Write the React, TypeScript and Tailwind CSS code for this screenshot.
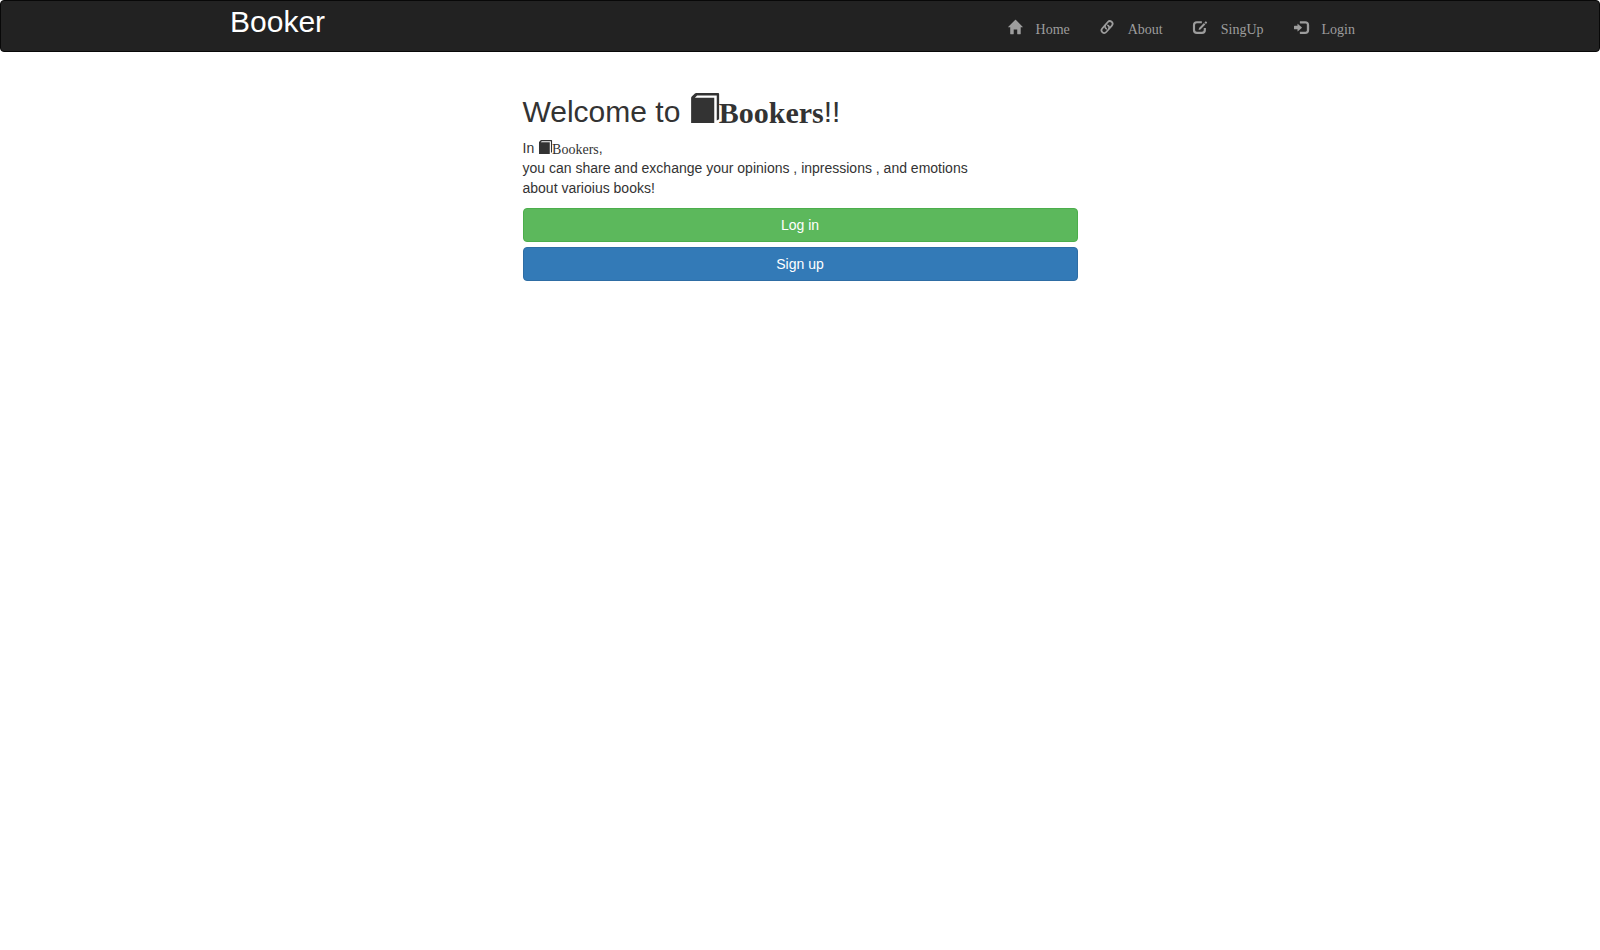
import type { ReactNode } from "react";

function Glyph({ className, children }: { className: string; children: ReactNode }) {
  return (
    <svg viewBox="0 0 1200 1200" fill="currentColor" overflow="visible" aria-hidden="true" className={`inline-block shrink-0 align-baseline ${className}`}>
      {children}
    </svg>
  );
}

function HomeIcon() {
  return (
    <Glyph className="size-3.5">
      <path transform="matrix(1 0 0 -1 -10 1215)" d="M18 618l620 608q8 7 18.5 7t17.5 -7l608 -608q8 -8 5.5 -13t-12.5 -5h-175v-575q0 -10 -7.5 -17.5t-17.5 -7.5h-250q-10 0 -17.5 7.5t-7.5 17.5v375h-300v-375q0 -10 -7.5 -17.5t-17.5 -7.5h-250q-10 0 -17.5 7.5t-7.5 17.5v575h-175q-10 0 -12.5 5t5.5 13z" />
    </Glyph>
  );
}

function LinkIcon() {
  return (
    <Glyph className="size-3.5">
      <g transform="translate(604 604) rotate(-49) scale(85.7)" fill="none" stroke="currentColor" strokeWidth="1.7">
        <path d="M-.2 2.7H4.3A2.7 2.7 0 0 0 4.3-2.7H.9A2.7 2.7 0 0 0-1.8 0Q-1.8 .6-1.4 1.1" />
        <path d="M.2-2.7H-4.3A2.7 2.7 0 0 0-4.3 2.7H-.9A2.7 2.7 0 0 0 1.8 0Q1.8-.6 1.4-1.1" />
      </g>
    </Glyph>
  );
}

function EditIcon() {
  return (
    <Glyph className="size-3.5">
      <path d="M760 190H330Q85 190 85 435V865Q85 1110 330 1110H770Q1015 1110 1015 865V690" fill="none" stroke="currentColor" strokeWidth="185" />
      <path d="M480 850L520 690L935 260L1060 385L640 810zM980 215L1070 125Q1100 100 1130 125L1200 195Q1220 225 1195 250L1105 340z" />
    </Glyph>
  );
}

function LoginIcon() {
  return (
    <Glyph className="size-3.5">
      <path transform="matrix(1 0 0 -1 0 1200)" d="M550 1100h400q165 0 257.5 -92.5t92.5 -257.5v-400q0 -165 -92.5 -257.5t-257.5 -92.5h-400q-21 0 -35.5 14.5t-14.5 35.5v100q0 21 14.5 35.5t35.5 14.5h450q41 0 70.5 29.5t29.5 70.5v500q0 41 -29.5 70.5t-70.5 29.5h-450q-21 0 -35.5 14.5t-14.5 35.5v100q0 21 14.5 35.5t35.5 14.5zM338 867l324 -284q16 -14 16 -33t-16 -33l-324 -284q-16 -14 -27 -9t-11 26v150h-250q-21 0 -35.5 14.5t-14.5 35.5v200q0 21 14.5 35.5t35.5 14.5h250v150q0 21 11 26t27 -9z" />
    </Glyph>
  );
}

function BookIcon({ className }: { className: string }) {
  return (
    <Glyph className={className}>
      <path d="M85 1200V190Q85 165 110 140L225 25Q250 0 290 0H1165Q1205 0 1205 40V1050L1110 1100V100H325L235 190H1010V1200z" />
    </Glyph>
  );
}

const links = [
  { label: "Home", icon: <HomeIcon /> },
  { label: "About", icon: <LinkIcon /> },
  { label: "SingUp", icon: <EditIcon /> },
  { label: "Login", icon: <LoginIcon /> },
];

const serif = "font-['Liberation_Serif',serif]";

export default function App() {
  return (
    <div className="min-h-screen bg-white font-['Liberation_Sans',Arial,sans-serif] text-sm leading-5 text-[#333]">
      <nav className="h-[52px] rounded border border-[#080808] bg-[#222]">
        <div className="mx-auto flex w-[1140px] items-start justify-between">
          <h2 className="pt-1 text-[30px] leading-[33px] text-white">Booker</h2>
          <ul className="flex gap-[30px] pt-[19px] pr-[15px] text-[#9d9d9d]">
            {links.map(({ label, icon }) => (
              <li key={label}>
                <a href="#" className={`flex items-baseline gap-3.5 leading-[14px] ${serif}`}>
                  {icon}
                  <span>{label}</span>
                </a>
              </li>
            ))}
          </ul>
        </div>
      </nav>
      <main className="mx-auto w-[555px] pt-10">
        <h2 className="mb-[13px] h-[33px] text-[30px] leading-[33px] whitespace-nowrap">
          Welcome to{" "}
          <span className={`relative top-px inline-block leading-none font-bold ${serif}`}>
            <BookIcon className="size-[30px]" />Bookers
          </span>
          !!
        </h2>
        <p className="mb-2.5">
          In{" "}
          <span className={`relative top-px inline-block leading-none ${serif}`}>
            <BookIcon className="size-3.5" />Bookers
          </span>
          ,<br />
          you can share and exchange your opinions , inpressions , and emotions
          <br />
          about varioius books!
        </p>
        <div className="flex flex-col gap-[5px]">
          <a href="#" className="block rounded border border-[#4cae4c] bg-[#5cb85c] py-1.5 text-center text-white">Log in</a>
          <a href="#" className="block rounded border border-[#2e6da4] bg-[#337ab7] py-1.5 text-center text-white">Sign up</a>
        </div>
      </main>
    </div>
  );
}
